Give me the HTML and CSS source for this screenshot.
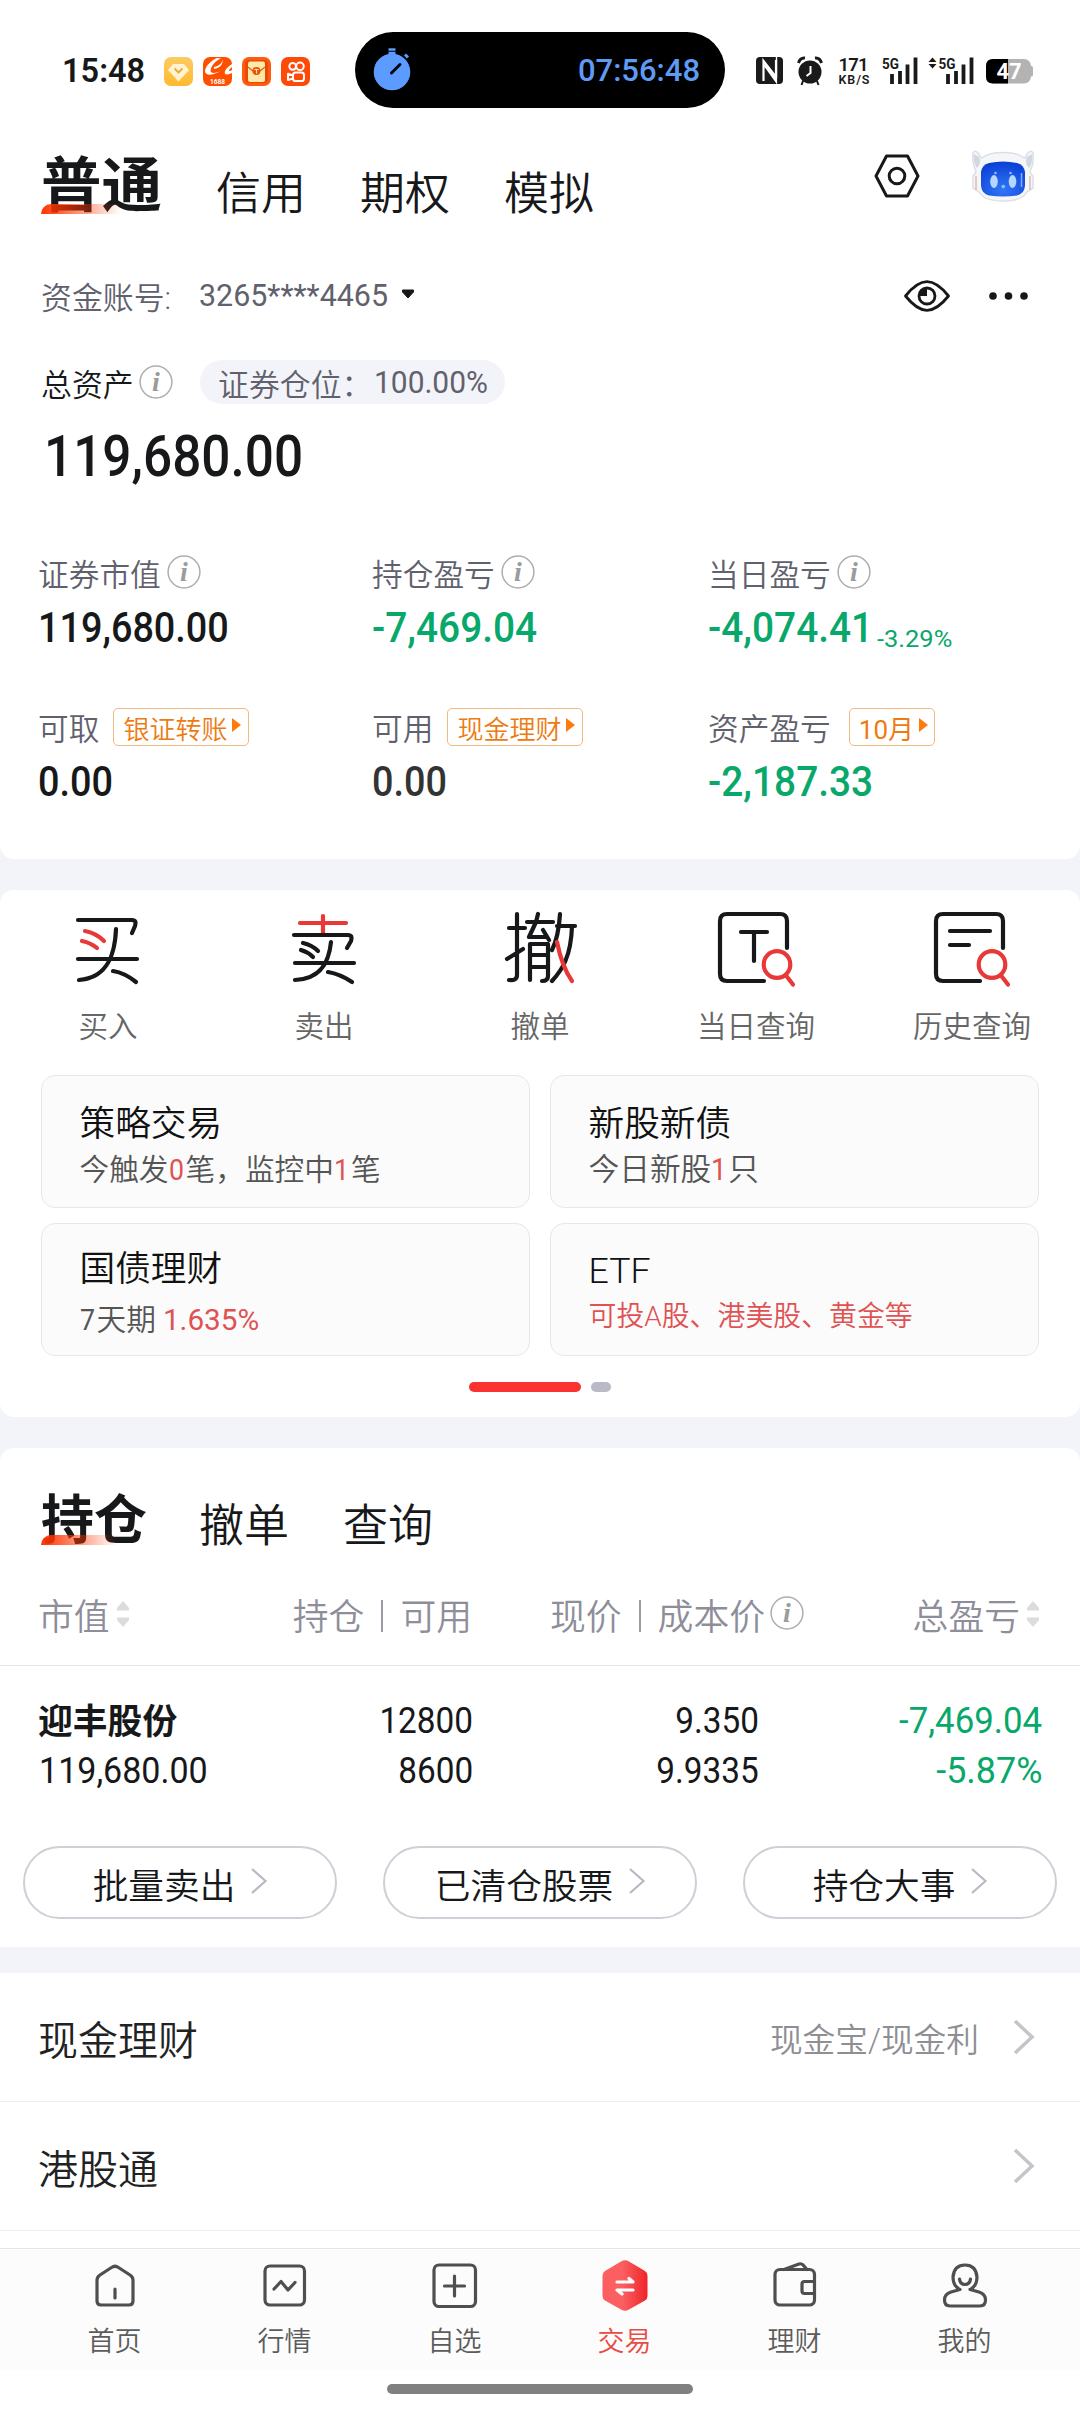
FILE: index.html
```html
<!DOCTYPE html>
<html lang="zh-CN">
<head>
<meta charset="utf-8">
<title>交易</title>
<link rel="stylesheet" href="styles.css">
</head>
<body>
<svg class="defs" width="0" height="0">
  <defs>
    <symbol id="info" viewBox="0 0 34 34"><circle cx="17" cy="17" r="15.9" fill="none" stroke="#aeaeae" stroke-width="1.5"/><text x="17" y="26" text-anchor="middle" font-family="Liberation Serif, serif" font-style="italic" font-weight="700" font-size="28" fill="#9b9b9b">i</text></symbol>
    <symbol id="sort" viewBox="0 0 12 26"><path d="M6 0 12 7V9.500H0V7ZM0 16.500H12V19L6 26 0 19Z" fill="#dcdcde"/></symbol>
    <symbol id="chev" viewBox="0 0 18 26"><path d="M2 1 15.500 13 2 25" fill="none" stroke="#b9b9c3" stroke-width="2.200"/></symbol>
    <symbol id="search" viewBox="0 0 36 40"><circle cx="17" cy="17" r="13.300"/><path d="M26 28 33 37"/></symbol>
    <linearGradient id="hexg"><stop offset=".45" stop-color="#fb5f62"/><stop offset="1" stop-color="#ee2428"/></linearGradient>
    <radialGradient id="face" cx=".5" cy=".8" r=".8"><stop offset="0" stop-color="#2f78f5"/><stop offset="1" stop-color="#0b3ed6"/></radialGradient>
    <linearGradient id="gold" x2="0" y2="1"><stop stop-color="#fdcb62"/><stop offset="1" stop-color="#ffb92e"/></linearGradient>
  </defs>
</svg>

<header class="status">
  <span class="clock">15:48</span>
  <div class="apps">
    <svg viewBox="0 0 29 29"><rect width="29" height="29" rx="7" fill="url(#gold)"/><path d="M9 7.500H20L24.500 13 14.500 24 4.500 13Z" fill="#fff3d2" stroke="#fff3d2" stroke-linejoin="round"/><path d="M10.500 11.500 14.500 15.500 18.500 11.500" fill="none" stroke="#f0a92c" stroke-width="1.800"/></svg>
    <svg viewBox="0 0 29 29"><rect width="29" height="29" rx="7" fill="#ff5000"/><path d="M14 1C7 4 2 10 2 14.500 3 19 9 18.500 18 14 13 16 8 17 7.500 14 8 9 12 4 18 1.500ZM11 10C16 9 20 6 19 2 21 7 17 11 11 12ZM29 7C24 10 21 14 22 17 24 18 27 17 29 16V13C26 15 24 14 29 10Z" fill="#fff"/><text x="14.500" y="26.500" text-anchor="middle" font-size="6.500" font-weight="700" fill="#fff">1688</text></svg>
    <svg viewBox="0 0 29 29"><rect width="29" height="29" rx="7" fill="#ff5a0d"/><rect x="3" y="3" width="23" height="23" rx="4" fill="#e84a08"/><rect x="6" y="4.500" width="17" height="20.500" rx="2" fill="#ffe9a8"/><path d="M6 10 11 14H18L23 10" fill="none" stroke="#d86a1a" stroke-width="1.300"/><circle cx="14.500" cy="14" r="4" fill="#e8560c"/><path d="M12.500 12.500H16.500M14.500 12.500V16.500" stroke="#ffe9a8"/></svg>
    <svg viewBox="0 0 29 29"><rect width="29" height="29" rx="7" fill="#ff4906"/><g fill="none" stroke="#fff" stroke-width="2"><circle cx="11.700" cy="9.300" r="3.400"/><circle cx="19" cy="9.300" r="3.800"/><rect x="12" y="15.500" width="11" height="8.500" rx="2.600"/><path d="M12 18.500 7 16.800V23L12 21.500" stroke-linejoin="round"/></g></svg>
  </div>
  <div class="island">
    <svg class="watch" viewBox="0 0 38 44"><circle cx="19" cy="25" r="18.300" fill="#5c9bff"/><path d="M15.500 2.500H22.500M15.500 6H22.500" stroke="#5c9bff" stroke-width="2.400"/><path d="M32 7.500 35 10.500" stroke="#5c9bff" stroke-width="3"/><path d="M18.500 26 27 17.500" stroke="#05070c" stroke-width="3" stroke-linecap="round"/></svg>
    <span>07:56:48</span>
  </div>
  <svg class="signals" viewBox="0 0 280 30" font-family="Roboto, sans-serif" fill="#1a1a1a">
    <rect y="1" width="27" height="27" rx="4"/><path d="M7.500 25V5L20 21M20 4V25L8.500 9" fill="none" stroke="#fff" stroke-width="2.200"/><path d="M20.500 1V22" stroke="#fff" stroke-width="1.400"/>
    <circle cx="54" cy="16" r="11.500"/><path d="M42.500 7Q44 1.500 49 2M65.500 7Q64 1.500 59 2" fill="none" stroke="#1a1a1a" stroke-width="3"/><path d="M47 25 45.500 29M61 25 62.500 29" stroke="#1a1a1a" stroke-width="2"/><path d="M54.500 10V17L50.500 20" fill="none" stroke="#fff" stroke-width="2"/>
    <text x="82.500" y="14.500" font-size="18.500" font-weight="600" textLength="30">171</text><text x="82.500" y="28" font-size="12.500" font-weight="600" textLength="31">KB/S</text>
    <text x="126" y="13" font-size="15.500" font-weight="700" textLength="17" lengthAdjust="spacingAndGlyphs">5G</text>
    <path d="M136 18V28M144 15V28M151.500 8.500V28M159.500 1.500V28" stroke="#1a1a1a" stroke-width="3.800"/>
    <path d="M172.500 6 176.500 1.500 180.500 6ZM172.500 8 176.500 12.500 180.500 8Z"/>
    <text x="182.500" y="13" font-size="15.500" font-weight="700" textLength="17" lengthAdjust="spacingAndGlyphs">5G</text>
    <path d="M192 18V28M200 15V28M207.500 8.500V28M215.500 1.500V28" stroke="#1a1a1a" stroke-width="3.800"/>
    <rect x="230" y="3" width="45" height="24.500" rx="7" fill="#b3b3b3"/><path d="M274 10H275.500Q277 10 277 12V18.500Q277 20.500 275.500 20.500H274Z" fill="#b3b3b3"/><path d="M252 3H237Q230 3 230 10V20.500Q230 27.500 237 27.500H252Z" fill="#000"/><text x="253" y="23" text-anchor="middle" font-size="22" font-weight="700" fill="#fff">47</text>
  </svg>
</header>

<main>
<section class="panel account">
  <div class="topbar">
    <nav class="tabs">
      <b class="on">普通</b><span>信用</span><span>期权</span><span>模拟</span>
    </nav>
    <svg class="hex" viewBox="0 0 46 44" fill="none" stroke="#17181a" stroke-width="3" stroke-linejoin="round"><path d="M12.500 2H33.500L44 22 33.500 42H12.500L2 22Z"/><circle cx="23" cy="22" r="7.800"/></svg>
    <svg class="robot" viewBox="0 0 62 52"><path d="M1 3Q3-1 7 4Q8 8 10 8Q16 2.500 31 2.500T52 8Q54 8 55 4Q59-1 61 3 62 14 58 21Q59 25 61 26V38L55 42Q50 51 31 51 12 51 7 42L1 38V26Q3 25 4 21Q0 14 1 3Z" fill="#f5f6f8" stroke="#dcdfe4" stroke-width="1.500"/><path d="M2 4Q1 13 5 18 10 13 7 7ZM60 4Q61 13 57 18 52 13 55 7Z" fill="#cfd9e4"/><path d="M4 26V40M58 26V40" stroke="#dbb9b5" stroke-width="1.500"/><path d="M17 13Q31 10 45 13 52 15 53 22V36Q52 44 45 45.500 31 47.500 17 45.500 10 44 9 36V22Q10 15 17 13Z" fill="url(#face)"/><ellipse cx="22" cy="31.500" rx="3.800" ry="6.500" fill="#b5d6ff"/><ellipse cx="40.500" cy="31.500" rx="3.800" ry="6.500" fill="#b5d6ff"/><circle cx="31.300" cy="36.500" r="1.800" fill="#8ec0ff"/><circle cx="23.500" cy="23" r="1.300" fill="#8ec0ff"/><circle cx="38.500" cy="23" r="1.300" fill="#8ec0ff"/><path d="M49.500 23V37" stroke="#7caeff" stroke-width="1.500"/></svg>
  </div>

  <div class="acct">
    <span>资金账号:</span><span class="num no">3265****4465</span>
    <svg class="caret" viewBox="0 0 14 10"><path d="M1.500 1H12.500V3L7 9 1.500 3Z" fill="#17181a" stroke="#17181a" stroke-linejoin="round"/></svg>
    <svg class="eye" viewBox="0 0 48 32" fill="none" stroke="#17181a" stroke-width="2.800" stroke-linejoin="round"><path d="M2.500 16Q14 1.700 24 1.700T45.500 16Q34 30.300 24 30.300T2.500 16Z"/><circle cx="24" cy="16" r="8"/><path d="M24 16V8A8 8 0 0 0 16 16Z" fill="#17181a" stroke="none"/></svg>
    <svg class="more" viewBox="0 0 40 8" fill="#17181a"><circle cx="4" cy="4" r="3.800"/><circle cx="19.500" cy="4" r="3.800"/><circle cx="35" cy="4" r="3.800"/></svg>
  </div>

  <div class="total-head">
    <span>总资产</span><svg class="info"><use href="#info"/></svg>
    <div class="ratio"><span>证券仓位：</span><span class="num">100.00%</span></div>
  </div>
  <div class="total"><span class="num">119,680.00</span></div>

  <div class="stats">
    <div><div class="label">证券市值<svg class="info"><use href="#info"/></svg></div><div class="value"><span class="num">119,680.00</span></div></div>
    <div><div class="label">持仓盈亏<svg class="info"><use href="#info"/></svg></div><div class="value down"><span class="num">-7,469.04</span></div></div>
    <div><div class="label">当日盈亏<svg class="info"><use href="#info"/></svg></div><div class="value down"><span class="num daily">-4,074.41</span><small class="num pct">-3.29%</small></div></div>
    <div><div class="label">可取<span class="tag">银证转账<i></i></span></div><div class="value"><span class="num">0.00</span></div></div>
    <div><div class="label">可用<span class="tag">现金理财<i></i></span></div><div class="value soft"><span class="num">0.00</span></div></div>
    <div><div class="label">资产盈亏<span class="tag month">10月<i></i></span></div><div class="value down"><span class="num">-2,187.33</span></div></div>
  </div>
</section>

<section class="panel trade">
  <div class="actions">
    <div><svg viewBox="0 0 80 80"><path d="M10 11H64Q69 11 67 17L64 24M48 20C47 45 40 69 11 71M10 50H69M45 62Q57 64 68 73"/><path class="r" d="M17 22Q28 24 36 32M14 32Q23 34 29 39"/></svg><span>买入</span></div>
    <div><svg viewBox="0 0 80 80"><path class="r" d="M9 14H55M32 7V25" transform="translate(7)"/><path d="M3 26H57Q62 26 60 32L56 39M40 33C38 53 30 70 4 71M4 54H63M37 63Q49 65 61 73M12 34Q21 36 27 42M10 41Q17 43 22 48" transform="translate(7)"/></svg><span>卖出</span></div>
    <div><svg viewBox="0 0 80 80"><path d="M9 19H25M17 5V66Q17 72 9 71M7 50 23 40M27 13H53M38 5 36 13 29 28H47M43 21 49 31M30 71V35H48V67Q48 72 42 72M30 46H48M30 58H48M60 5C59 21 57 31 52 41M57 17H75M72 17C71 48 62 61 52 72"/><path class="r" d="M57 33Q62 58 72 72"/></svg><span>撤单</span></div>
    <div><svg viewBox="0 0 80 80"><path d="M71 39V12Q71 5 64 5H11Q4 5 4 12V65Q4 72 11 72H48M25 23H51M38 23V52"/><use class="r" href="#search" x="44" y="38.500" width="36" height="40"/></svg><span>当日查询</span></div>
    <div><svg viewBox="0 0 80 80"><path d="M71 39V12Q71 5 64 5H11Q4 5 4 12V65Q4 72 11 72H48M18 22H58M18 36H37"/><use class="r" href="#search" x="43" y="38.500" width="36" height="40"/></svg><span>历史查询</span></div>
  </div>
  <div class="cards">
    <div><h3>策略交易</h3><p>今触发<em class="num d1">0</em>笔，监控中<em class="num d1">1</em>笔</p></div>
    <div class="ipo"><h3>新股新债</h3><p>今日新股<em class="num d1">1</em>只</p></div>
    <div class="low"><h3>国债理财</h3><p><span class="num d1">7</span>天期<em class="num rate">1.635%</em></p></div>
    <div class="etf"><h3>ETF</h3><p><em>可投A股、港美股、黄金等</em></p></div>
  </div>
  <div class="dots"><i class="cur"></i><i></i></div>
</section>

<section class="panel holdings">
  <nav class="tabs small"><b class="on">持仓</b><span>撤单</span><span>查询</span></nav>
  <div class="row head">
    <div>市值<svg class="sort"><use href="#sort"/></svg></div>
    <div>持仓<i></i>可用</div>
    <div>现价<i></i>成本价<svg class="info"><use href="#info"/></svg></div>
    <div>总盈亏<svg class="sort"><use href="#sort"/></svg></div>
  </div>
  <div class="row stock">
    <div><b>迎丰股份</b><span class="num">119,680.00</span></div>
    <div><span class="num">12800</span><span class="num">8600</span></div>
    <div><span class="num">9.350</span><span class="num">9.9335</span></div>
    <div class="down"><span class="num">-7,469.04</span><span class="num pct">-5.87%</span></div>
  </div>
  <div class="pills">
    <div>批量卖出<svg><use href="#chev"/></svg></div>
    <div>已清仓股票<svg><use href="#chev"/></svg></div>
    <div>持仓大事<svg><use href="#chev"/></svg></div>
  </div>
</section>

<section class="list">
  <div><span>现金理财</span><small>现金宝/现金利</small><svg viewBox="0 0 24 38"><path d="M3 3 20 19 3 35" fill="none" stroke="#c4c4c9" stroke-width="3.500"/></svg></div>
  <div><span>港股通</span><svg viewBox="0 0 24 38"><path d="M3 3 20 19 3 35" fill="none" stroke="#c4c4c9" stroke-width="3.500"/></svg></div>
</section>
</main>

<footer>
  <nav class="bottom">
    <div><svg viewBox="0 0 50 50"><path d="M21.500 5.500Q25 3 28.500 5.500L40 13Q43 15 43 18V39Q43 43 39 43H11Q7 43 7 39V18Q7 15 10 13ZM25 27V36"/></svg><span>首页</span></div>
    <div><svg viewBox="0 0 50 50"><rect x="5" y="4" width="39.500" height="39" rx="5"/><path d="M14 27 21 19.500 28 28 35 20.500"/></svg><span>行情</span></div>
    <div><svg viewBox="0 0 50 50"><rect x="4" y="3" width="41.500" height="41.500" rx="5"/><path d="M14.500 24H34.500M24.500 14V34"/></svg><span>自选</span></div>
    <div class="on"><svg viewBox="0 0 50 50"><path d="M21-.5Q25-3 29-.5L45 9Q47.500 10.500 47.500 14V34Q47.500 37 45 38.500L29 47.500Q25 50 21 47.500L5 38.500Q2.500 37 2.500 34V14Q2.500 10.500 5 9Z" fill="url(#hexg)" stroke="none"/><path d="M17 20H33L29 16.500M33 28H17L22 32" stroke="#fff" stroke-width="3.200"/></svg><span>交易</span></div>
    <div><svg viewBox="0 0 50 50"><rect x="5" y="7.500" width="39.500" height="35.500" rx="5"/><path d="M14 7.500 29 2Q32 1 34 4L37 7.500M44 19.500H34.500Q32 19.500 32 22V29Q32 31.500 34.500 31.500H44"/></svg><span>理财</span></div>
    <div><svg viewBox="0 0 50 50"><path d="M20 27.500Q13 24 13 15 14 3 25 3T37 15Q37 24 30 27.500L39 30Q45.500 32 45.500 38 45.500 44 40 44H10Q4.500 44 4.500 38 4.500 32 11 30ZM19.500 17Q20 22.500 25 22.500T30.500 17"/></svg><span>我的</span></div>
  </nav>
  <div class="homebar"></div>
</footer>
</body>
</html>
```
FILE: styles.css
```css
* { box-sizing: border-box; }
body {
  margin: 0;
  width: 1080px;
  height: 2412px;
  overflow: hidden;
  background: #f3f4f9;
  color: #17181a;
  font-family: Roboto, "Noto Sans CJK SC", sans-serif;
  font-weight: 350;
  display: flex;
  flex-direction: column;
}
.defs { position: absolute; }
svg { display: block; flex: none; overflow: visible; }
i, em { font-style: normal; }
b { font-weight: 700; }

/* condensed numerals */
.num { display: inline-block; transform: scaleX(.9); transform-origin: 0 50%; white-space: nowrap; }
.acct .num, .ratio .num, .cards .num { font-weight: 400; }
.down { color: #08a76a; }
.info { width: 34px; height: 34px; }

.status { height: 140px; background: #fff; display: flex; align-items: flex-start; }
.clock { width: 100px; margin: 51px 0 0 62px; line-height: 40px; font-size: 32.5px; font-weight: 600; }
.apps { display: flex; gap: 10px; margin-top: 57px; width: 193px; padding-left: 2px; }
.apps svg { width: 29px; height: 29px; }
.island { width: 370px; height: 76px; margin-top: 32px; border-radius: 38px; background: #000; display: flex; align-items: center; padding: 0 25px 0 18px; justify-content: space-between; color: #5f9bf5; font-size: 31px; font-weight: 500; }
.island span { line-height: 40px; padding-top: 2px; }
.watch { width: 38px; height: 44px; margin-top: -3px; }
.signals { width: 280px; height: 30px; margin: 56px 0 0 31px; }

.panel { background: #fff; border-radius: 14px; }
.account { height: 719px; border-radius: 0 0 14px 14px; }
.topbar { display: flex; height: 90px; padding-left: 41px; }
.tabs { display: flex; align-items: flex-start; font-size: 45px; width: 834px; }
.tabs .on { width: 175px; height: 90px; font-size: 60.5px; line-height: 94px; position: relative; }
.tabs .on::after { content: ""; position: absolute; left: 0; top: 64px; width: 80px; height: 10px; border-radius: 10px 0 0 0; background: linear-gradient(90deg, #ff3300, rgba(255, 51, 0, 0)); }
.tabs span { width: 144px; line-height: 66px; padding-top: 22px; }
.hex { width: 46px; height: 44px; margin: 14px 52px 0 -1px; }
.robot { width: 62px; height: 52px; margin-top: 10px; }

.acct { display: flex; align-items: center; height: 60px; margin-top: 36px; padding-left: 41px; font-size: 30.9px; color: #61616e; }
.acct span { margin-top: -2px; }
.acct span:first-child { width: 158px; }
.no { width: 202px; font-size: 31.5px; transform: scaleX(.965); }
.caret { width: 14px; height: 10px; margin-top: -4px; }
.eye { width: 48px; height: 32px; margin-left: 488px; }
.more { width: 40px; height: 8px; margin-left: 38px; }

.total-head { display: flex; align-items: center; height: 44px; margin-top: 34px; padding-left: 41px; font-size: 30.9px; }
.total-head > span { width: 98px; }
.total-head .info { margin-top: -1px; }
.ratio { width: 305px; height: 44px; margin-left: 27px; border-radius: 22px; background: #f3f4f9; color: #61616e; display: flex; align-items: center; padding-left: 18px; }
.ratio span:first-child { width: 156px; }
.ratio .num { transform: scaleX(.95); font-size: 31.5px; }
.total { height: 100px; padding-left: 44px; line-height: 104px; font-size: 58px; font-weight: 500; }
.total .num { transform: scaleX(.885); }

.stats { display: grid; grid-template-columns: 334px 336px 1fr; grid-template-rows: 154px 150px; margin-top: 46px; padding-left: 38px; }
.label { display: flex; align-items: center; height: 44px; font-size: 30.7px; color: #61616e; }
.label .info { margin: -1px 0 0 6px; }
.value { height: 60px; line-height: 68px; font-size: 42px; font-weight: 500; display: flex; }
.value.down .num { transform: scaleX(.925); }
.soft { color: #333; }
.value.down .pct { font-size: 24px; font-weight: 400; margin-top: 11px; transform: scaleX(1.06); }
.daily { width: 169px; }
.tag { height: 38px; width: 136px; margin: 1px 0 0 14px; border: 1.5px solid #edbb80; border-radius: 5px; font-size: 26px; color: #ee7a12; display: flex; align-items: center; padding: 1px 0 0 9px; }
.tag i { width: 0; height: 0; margin-left: 5px; margin-top: -4px; border: 7px solid transparent; border-left: 9px solid #ff7a0a; border-right: 0; }
.month { width: 86px; margin-left: 18px; font-weight: 400; }
.month i { margin-left: 5px; }

.trade { height: 527px; margin-top: 31px; overflow: hidden; }
.actions { display: flex; }
.actions div { width: 216px; display: flex; flex-direction: column; align-items: center; padding-top: 19px; }
.actions svg { width: 80px; height: 80px; fill: none; stroke: #17181a; stroke-width: 4.200; stroke-linecap: round; stroke-linejoin: round; }
.actions .r { stroke: #e83838; }
.actions span { font-size: 29.5px; line-height: 44px; margin-top: 16px; color: #666; }
.cards { display: grid; grid-template-columns: 489px 489px; grid-template-rows: 133px 133px; gap: 15px 20px; margin: 26px 0 0 40.5px; }
.cards > div { border: 1.5px solid #e6e7ec; border-radius: 14px; background: #fbfbfc; padding: 22px 0 0 38px; }
.cards h3 { margin: 0; font-size: 35.7px; font-weight: 350; line-height: 52px; height: 52px; color: #111; }
.cards p { margin: 0; font-size: 29.7px; line-height: 40px; height: 40px; color: #555; display: flex; }
.cards em { color: #e05252; }
.cards .ipo p { font-size: 30.7px; }
.cards .low h3 { margin-top: -3px; }
.cards .low p { margin-top: 5px; }
.cards .etf h3 { margin-top: -1px; }
.cards .etf p { font-size: 27.9px; }
.d1 { width: 17px; }
.cards .rate { margin-left: 7px; transform: scaleX(1); }
.dots { display: flex; gap: 10px; margin: 26px 0 0 469px; }
.dots i { width: 20px; height: 10px; border-radius: 5px; background: #b9bac5; }
.dots .cur { width: 112px; background: #fa3232; }

.holdings { height: 499px; margin-top: 31px; border-radius: 14px 14px 0 0; }
.small { padding-left: 41px; padding-top: 25px; height: 127px; }
.small span { padding-top: 20.5px; }
.small .on { width: 158px; font-size: 53px; line-height: 97px; height: 92px; }
.small .on::after { top: 62px; width: 76px; }
.row { display: grid; padding-left: 38px; }
.head { grid-template-columns: 232px 202px 332px 235px; height: 91px; border-bottom: 1.5px solid #e7e8ea; font-size: 35.8px; color: #8e8e9a; }
.head > div { display: flex; align-items: center; height: 78px; justify-content: flex-end; }
.head > div:first-child { justify-content: flex-start; }
.head i { width: 2px; height: 32px; margin: 3px 17px 0; background: #9b9ba6; }
.sort { width: 12px; height: 26px; margin: -1px 0 0 7px; }
.head .info { margin: -2px 0 0 5px; }
.stock { grid-template-columns: 232px 203px 286px 283px; height: 180px; padding-top: 30px; font-size: 37px; font-weight: 450; }
.stock > div { display: flex; flex-direction: column; align-items: flex-end; line-height: 50px; }
.stock > div:first-child { align-items: flex-start; }
.stock > div:first-child .num { transform: scaleX(.92); margin-left: 1px; }
.stock > div:not(:first-child) .num { transform-origin: 100% 50%; }
.stock > .down .num { transform: scaleX(.94); }
.stock > .down .pct { transform: scaleX(.97); }
.stock b { font-size: 34.800px; padding-top: 1px; margin-bottom: -1px; }
.pills { display: flex; gap: 46px; padding-left: 23px; }
.pills > div { width: 314px; height: 73px; border: 2px solid #cfcfd7; border-radius: 37px; display: flex; align-items: center; justify-content: center; font-size: 35.7px; padding: 2px 0 0 1px; }
.pills svg { width: 18px; height: 26px; margin: -6px 0 0 15px; }

.list { background: #fff; height: 275px; margin-top: 26px; }
.list > div { height: 129px; border-bottom: 1.5px solid #eee; display: flex; align-items: center; padding: 0 44px 0 38px; }
.list span { flex: 1; font-size: 40px; padding-top: 1px; color: #222; }
.list small { font-size: 32.700px; color: #8e8e93; margin-right: 33px; padding-top: 1px; }
.list svg { width: 24px; height: 38px; }

footer { background: #fff; }
.bottom { display: flex; height: 122px; padding-left: 29.5px; background: #fcfcfc; border-top: 1.5px solid #e4e5e8; }
.bottom div { width: 170px; display: flex; flex-direction: column; align-items: center; padding-top: 13px; }
.bottom svg { width: 50px; height: 50px; fill: none; stroke: #4f4f4f; stroke-width: 3.200; stroke-linecap: round; stroke-linejoin: round; }
.bottom span { font-size: 27px; line-height: 38px; margin-top: 11px; color: #5c5c5c; }
.bottom .on span { color: #ea4a44; }
.homebar { width: 306px; height: 10px; border-radius: 5px; background: #808080; margin: 14px 0 18px 387px; }
```
